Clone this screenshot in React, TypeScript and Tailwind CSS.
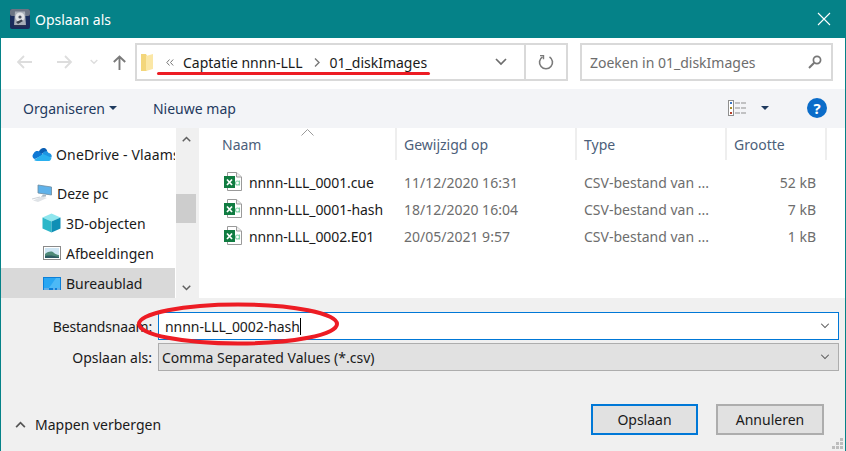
import React from "react";

const Chevron = ({ className = "", color = "#555", sw = 1.2, up = false }: { className?: string; color?: string; sw?: number; up?: boolean }) => (
  <svg className={className} viewBox="0 0 12 8" fill="none">
    <path d={up ? "M1 7 L6 2 L11 7" : "M1 1 L6 6 L11 1"} stroke={color} strokeWidth={sw} />
  </svg>
);

const ExcelIcon = () => (
  <svg width="18" height="19" viewBox="0 0 18 19" className="shrink-0 -mt-[3px]">
    <path d="M3.5 .5H12.5L17.5 5V18.5H3.5Z" fill="#fff" stroke="#9a9a9a" />
    <path d="M12.5 .5V5H17.5" fill="#eee" stroke="#9a9a9a" />
    <rect x="0" y="4" width="11" height="12" fill="#107c41" />
    <path d="M3 7.5 L8 13 M8 7.5 L3 13" stroke="#fff" strokeWidth="1.7" />
    <circle cx="13.5" cy="11" r="2" fill="none" stroke="#7fd0a5" strokeWidth="1.1" />
    <path d="M15.5 8.5V13.5" stroke="#7fd0a5" strokeWidth="1.1" />
  </svg>
);

const AppIcon = () => (
  <svg width="20" height="20" viewBox="0 0 20 20" className="shrink-0">
    <rect width="20" height="20" rx="2" fill="#1a2c5c" />
    <rect x="0" y="0" width="20" height="7" rx="2" fill="#6c7484" />
    <path d="M5 2.5H15L16 17H4Z" fill="#a9afb9" />
    <ellipse cx="10" cy="8" rx="4.6" ry="4.6" fill="#e0e2e6" />
    <circle cx="10" cy="8" r="1.6" fill="#4a5160" />
    <path d="M6 13L11.5 10.5L13 12L8 15Z" fill="#39404e" />
    <rect x="4" y="16" width="12" height="1.6" fill="#2a3350" />
  </svg>
);

const OneDriveIcon = () => (
  <svg width="21" height="14" viewBox="0 0 21 14" className="shrink-0">
    <path d="M8 4.5C9 1.5 12 .3 14 1.2C15.3 1.8 16 3 16.3 4.5L8 8Z" fill="#0a5fb4" />
    <path d="M3 6C4 4 6.5 3.5 8 4.5L12 8L4 12C1.5 11.5 .5 8.5 3 6Z" fill="#0f78d4" />
    <path d="M12 5.5C14 3.6 17 4 17.5 6C20 6 21.5 8.5 20.3 10.5L11 10Z" fill="#1d94e2" />
    <path d="M3 13C4 13.7 5 13.9 6 13.9H18C19 13.9 19.9 13 20.5 10.8L12 7Z" fill="#2ab0ef" />
  </svg>
);

const PcIcon = () => (
  <svg width="21" height="20" viewBox="0 0 21 20" className="shrink-0">
    <path d="M6 2L19.5 4V12L6 10Z" fill="#5fb2ea" stroke="#6d8ba0" strokeWidth=".8" />
    <path d="M11 11.5L14 12L14 13.5L9 14Z" fill="#aab7c2" />
    <path d="M1 17.5L10 13.5L15 15L6 19Z" fill="#dfe3e7" />
    <path d="M0 16L8 14" stroke="#cfd4d9" strokeWidth="1.2" />
  </svg>
);

const CubeIcon = () => (
  <svg width="19" height="20" viewBox="0 0 19 20">
    <path d="M9.5 .5L18.5 4.5L9.5 8.5L.5 4.5Z" fill="#8fe6ee" />
    <path d="M.5 4.5L9.5 8.5V19.5L.5 15.5Z" fill="#2cb7c9" />
    <path d="M18.5 4.5L9.5 8.5V19.5L18.5 15.5Z" fill="#0f8fb5" />
  </svg>
);

const PictureIcon = () => (
  <svg width="18" height="14" viewBox="0 0 18 14">
    <rect x=".5" y=".5" width="17" height="13" fill="#fff" stroke="#8a8a8a" />
    <rect x="2" y="2" width="14" height="10" fill="#cfe6f4" />
    <path d="M2 8C6 5 9 5 11 7C13 8.5 15 9 16 9V12H2Z" fill="#4f8a78" />
    <path d="M2 10C7 9 11 10 16 11V12H2Z" fill="#2d5b63" />
  </svg>
);

const DesktopIcon = () => (
  <svg width="18" height="13" viewBox="0 0 18 13">
    <rect width="18" height="13" fill="#0c7fd8" />
    <rect x="1" y="1" width="16" height="10" fill="#28a6f2" />
    <path d="M6 11L13 1H17V11Z" fill="#4cb9f6" />
    <path d="M10 12H12M14 12H17M1 12H6" stroke="#e8f5fe" strokeWidth=".8" />
  </svg>
);

const navRows = [
  { label: "3D-objecten", icon: <CubeIcon />, sel: false },
  { label: "Afbeeldingen", icon: <PictureIcon />, sel: false },
  { label: "Bureaublad", icon: <DesktopIcon />, sel: true },
];

const files = [
  ["nnnn-LLL_0001.cue", "11/12/2020 16:31", "52 kB"],
  ["nnnn-LLL_0001-hash", "18/12/2020 16:04", "7 kB"],
  ["nnnn-LLL_0002.E01", "20/05/2021 9:57", "1 kB"],
];

export default function App() {
  return (
    <div className="relative w-[846px] h-[451px] overflow-hidden flex flex-col bg-[#f0f0f0] border-x border-[#058288] font-['Noto_Sans',sans-serif] text-[14px] text-[#1a1a1a]">
      {/* Title bar */}
      <div className="h-[38px] shrink-0 bg-[#058288] flex items-center pl-[9px] pr-[14px] text-white">
        <AppIcon />
        <span className="ml-[5px] text-[14px]">Opslaan als</span>
        <svg className="ml-auto" width="14" height="14" viewBox="0 0 14 14">
          <path d="M1 1L13 13M13 1L1 13" stroke="#fff" strokeWidth="1.1" />
        </svg>
      </div>

      {/* Address row */}
      <div className="h-[51px] shrink-0 bg-white flex items-start pt-[5px] pl-[16px]">
        <div className="flex items-center h-[38px] w-[118px] shrink-0">
          <svg width="16" height="14" viewBox="0 0 16 14" fill="none">
            <path d="M1 7H15M7 1L1 7L7 13" stroke="#dddddd" strokeWidth="1.8" />
          </svg>
          <svg className="ml-[24px]" width="16" height="14" viewBox="0 0 16 14" fill="none">
            <path d="M0 7H14M8 1L14 7L8 13" stroke="#dddddd" strokeWidth="1.8" />
          </svg>
          <Chevron className="ml-[17px] w-[8px] h-[6px]" color="#dddddd" sw={2} />
          <svg className="ml-[15px]" width="13" height="15" viewBox="0 0 13 15" fill="none">
            <path d="M6.5 15V1.5M.8 7L6.5 1.5L12.2 7" stroke="#7a7a7a" strokeWidth="1.9" />
          </svg>
        </div>
        <div className="w-[433px] h-[38px] shrink-0 border-2 border-[#d9d9d9] flex items-center">
          <svg className="ml-[4px] shrink-0" width="13" height="18" viewBox="0 0 13 18">
            <path d="M0 1H5L6 3V18H0Z" fill="#f3d67b" />
            <path d="M5 3L12 1V16L5 18Z" fill="#fbe7a6" />
          </svg>
          <svg className="ml-[12px] shrink-0" width="8" height="7" viewBox="0 0 8 7" fill="none">
            <path d="M3.5 .5L.8 3.5L3.5 6.5M7.2 .5L4.5 3.5L7.2 6.5" stroke="#777" strokeWidth="1" />
          </svg>
          <span className="ml-[9px] whitespace-nowrap">Captatie nnnn-LLL</span>
          <svg className="ml-[11px]" width="6" height="9" viewBox="0 0 6 9" fill="none">
            <path d="M1 .5L5 4.5L1 8.5" stroke="#777" strokeWidth="1.4" />
          </svg>
          <span className="ml-[10px] whitespace-nowrap">01_diskImages</span>
          <Chevron className="ml-auto mr-[17px] w-[12px] h-[8px]" color="#6d6d6d" sw={1.7} />
          <div className="w-[42px] h-full border-l-2 border-[#d9d9d9] flex items-center justify-center">
            <svg width="16" height="16" viewBox="0 0 16 16" fill="none">
              <path d="M4.5 2.8A6.5 6.5 0 1 0 11.5 2.8" stroke="#7a7a7a" strokeWidth="1.6" />
              <path d="M2 1.6H5.5V5.2" stroke="#7a7a7a" strokeWidth="1.4" />
            </svg>
          </div>
        </div>
        <div className="ml-[12px] w-[253px] h-[38px] border-2 border-[#d9d9d9] flex items-center pl-[8px] pr-[9px] text-[#6d6d6d]">
          <span className="whitespace-nowrap">Zoeken in 01_diskImages</span>
          <svg className="ml-auto" width="14" height="14" viewBox="0 0 14 14" fill="none">
            <circle cx="9" cy="5" r="3.6" stroke="#777" strokeWidth="1.7" />
            <path d="M6.2 7.8L1 13" stroke="#777" strokeWidth="2" />
          </svg>
        </div>
      </div>

      {/* Toolbar */}
      <div className="h-[39px] shrink-0 bg-[#f3f4f7] flex items-start pt-[1px] pl-[22px] text-[#1f3a5f]">
        <div className="h-[36px] flex items-center">
          <span>Organiseren</span>
          <span className="ml-[4px] w-0 h-0 border-x-[4px] border-x-transparent border-t-[4px] border-t-[#1f3a5f]" />
        </div>
        <div className="h-[36px] flex items-center ml-[36px]">Nieuwe map</div>
        <div className="h-[36px] flex items-center ml-auto pr-[18px]">
          <svg width="19" height="16" viewBox="0 0 19 16" fill="none">
            <rect x=".5" y=".5" width="5" height="15" fill="#fff" stroke="#8f8f8f" />
            <rect x="2" y="2" width="2" height="2" fill="#3a75c4" />
            <rect x="2" y="7" width="2" height="2" fill="#a58a2a" />
            <rect x="2" y="12" width="2" height="2" fill="#b5402a" />
            <path d="M7 3H12M13 3H18M7 8H12M13 8H18M7 13H12M13 13H18" stroke="#8f8f8f" />
          </svg>
          <span className="ml-[14px] w-0 h-0 border-x-[4px] border-x-transparent border-t-[4px] border-t-[#1f3a5f]" />
          <span className="ml-[38px] w-[20px] h-[20px] rounded-full bg-[#0b6cc9] text-white font-bold text-[15px] leading-none flex items-center justify-center">?</span>
        </div>
      </div>

      {/* Middle */}
      <div className="h-[170px] shrink-0 flex bg-white">
        <div className="w-[174px] shrink-0 flex flex-col overflow-hidden bg-white pt-[11px] whitespace-nowrap">
          <div className="h-[30px] flex items-center pl-[30px]">
            <OneDriveIcon />
            <span className="ml-[4px] shrink-0 tracking-[0.15px]">OneDrive - Vlaams</span>
          </div>
          <div className="h-[30px] mt-[9px] flex items-center pl-[31px]">
            <PcIcon />
            <span className="ml-[4px]">Deze pc</span>
          </div>
          {navRows.map((r) => (
            <div key={r.label} className={`h-[30px] shrink-0 flex items-center pl-[41px] ${r.sel ? "bg-[#d9d9d9]" : ""}`}>
              <span className="w-[19px] flex justify-center">{r.icon}</span>
              <span className="ml-[5px]">{r.label}</span>
            </div>
          ))}
        </div>
        <div className="w-[20px] ml-[1px] shrink-0 bg-[#f0f0f0] flex flex-col items-center">
          <Chevron className="mt-[8px] w-[9px] h-[6px]" color="#606060" sw={2} up />
          <div className="mt-[52px] w-full h-[29px] bg-[#cdcdcd]" />
          <Chevron className="mt-auto mb-[7px] w-[9px] h-[6px]" color="#606060" sw={2} />
        </div>
        <div className="w-[3px] shrink-0 bg-[#f0f0f0]" />
        <div className="flex-1 min-w-0 relative bg-white">
          <svg className="absolute left-[102px] top-[1px]" width="13" height="7" viewBox="0 0 13 7" fill="none">
            <path d="M.5 6.5L6.5 .5L12.5 6.5" stroke="#9a9a9a" />
          </svg>
          <div className="h-[32px] grid grid-cols-[198px_180px_150px_100px] text-[#4c607a]">
            <div className="border-r-2 border-[#eeeeee] pl-[23px] pt-[6px]">Naam</div>
            <div className="border-r-2 border-[#eeeeee] pl-[7px] pt-[6px]">Gewijzigd op</div>
            <div className="border-r-2 border-[#eeeeee] pl-[7px] pt-[6px]">Type</div>
            <div className="border-r-2 border-[#eeeeee] pl-[7px] pt-[6px]">Grootte</div>
          </div>
          <div className="pt-[9px]">
            {files.map((f) => (
              <div key={f[0]} className="h-[27px] grid grid-cols-[198px_180px_150px_89px] items-center whitespace-nowrap">
                <div className="flex items-center pl-[25px]">
                  <ExcelIcon />
                  <span className="ml-[7px] tracking-[-0.1px]">{f[0]}</span>
                </div>
                <div className="pl-[7px] text-[#6d6d6d]">{f[1]}</div>
                <div className="pl-[7px] text-[#6d6d6d]">CSV-bestand van ...</div>
                <div className="text-right text-[#6d6d6d]">{f[2]}</div>
              </div>
            ))}
          </div>
        </div>
      </div>

      {/* Bottom */}
      <div className="flex-1 min-h-0 flex flex-col bg-[#f0f0f0] relative">
        <div className="mt-[14px] h-[28px] flex items-center">
          <span className="w-[151px] text-right tracking-[-0.2px]">Bestandsnaam:</span>
          <div className="ml-[6px] w-[681px] h-[28px] border border-[#0078d7] bg-white flex items-center pl-[6px] pr-[8px]">
            <span className="tracking-[-0.05px]">nnnn-LLL_0002-hash</span>
            <span className="w-px h-[17px] bg-black" />
            <Chevron className="ml-auto w-[10px] h-[6px]" color="#555" sw={1.4} />
          </div>
        </div>
        <div className="mt-[3px] h-[28px] flex items-center">
          <span className="w-[151px] text-right">Opslaan als:</span>
          <div className="ml-[6px] w-[681px] h-[28px] border border-[#adadad] bg-[#e1e1e1] flex items-center pl-[3px] pr-[8px]">
            <span>Comma Separated Values (*.csv)</span>
            <Chevron className="ml-auto w-[10px] h-[6px]" color="#555" sw={1.4} />
          </div>
        </div>
        <div className="mt-[33px] flex items-center h-[31px]">
          <Chevron className="ml-[14px] w-[11px] h-[7px] mt-[9px]" color="#555" sw={2} up />
          <span className="ml-[9px] mt-[9px]">Mappen verbergen</span>
          <button className="ml-auto w-[107px] h-[31px] border-2 border-[#0078d7] bg-[#e1e1e1] text-center">Opslaan</button>
          <button className="ml-[18px] mr-[21px] w-[108px] h-[31px] border-2 border-[#adadad] bg-[#e1e1e1] text-center">Annuleren</button>
        </div>
        <svg className="absolute right-[1px] bottom-[1px]" width="12" height="12" viewBox="0 0 12 12" fill="#bdbdbd">
          <rect x="8" y="0" width="3" height="3" />
          <rect x="4" y="4" width="3" height="3" />
          <rect x="8" y="4" width="3" height="3" />
          <rect x="0" y="8" width="3" height="3" />
          <rect x="4" y="8" width="3" height="3" />
          <rect x="8" y="8" width="3" height="3" />
        </svg>
      </div>

      {/* Red annotations */}
      <div className="absolute left-[156px] top-[72px] w-[273px] h-[3px] rounded-full bg-[#ed1c24]" />
      <svg className="absolute left-[135px] top-[301px]" width="204" height="46" viewBox="0 0 204 46" fill="none">
        <ellipse cx="102" cy="23" rx="99" ry="19.5" stroke="#ed1c24" strokeWidth="4" />
      </svg>
    </div>
  );
}
